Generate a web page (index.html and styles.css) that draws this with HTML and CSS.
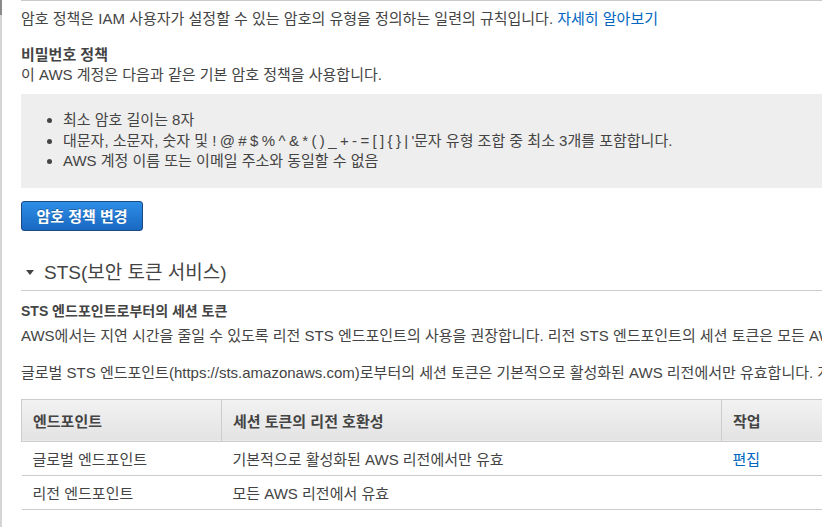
FILE: index.html
```html
<!DOCTYPE html>
<html lang="ko">
<head>
<meta charset="utf-8">
<link rel="stylesheet" href="styles.css">
</head>
<body>
<div class="page">
  <div class="content">
    <p class="intro">암호 정책은 IAM 사용자가 설정할 수 있는 암호의 유형을 정의하는 일련의 규칙입니다. <a class="link" href="#">자세히 알아보기</a></p>

    <h3 class="subhead">비밀번호 정책</h3>
    <p class="desc">이 AWS 계정은 다음과 같은 기본 암호 정책을 사용합니다.</p>

    <div class="policy-box">
      <ul class="policy-list">
        <li>최소 암호 길이는 8자</li>
        <li>대문자, 소문자, 숫자 및 <span class="symbols">! @ # $ % ^ &amp; * ( ) _ + - = [ ] { } | '</span>문자 유형 조합 중 최소 3개를 포함합니다.</li>
        <li>AWS 계정 이름 또는 이메일 주소와 동일할 수 없음</li>
      </ul>
    </div>

    <div class="actions">
      <button class="btn-primary" type="button">암호 정책 변경</button>
    </div>

    <h2 class="section-title"><span class="caret"></span>STS(보안 토큰 서비스)</h2>

    <h3 class="subhead subhead-sm">STS 엔드포인트로부터의 세션 토큰</h3>
    <p class="desc desc-first">AWS에서는 지연 시간을 줄일 수 있도록 리전 STS 엔드포인트의 사용을 권장합니다. 리전 STS 엔드포인트의 세션 토큰은 모든 AWS 리전에서 유효합니다.</p>
    <p class="desc desc-gap">글로벌 STS 엔드포인트(https://sts.amazonaws.com)로부터의 세션 토큰은 기본적으로 활성화된 AWS 리전에서만 유효합니다. 계정에서 활성화하는 리전을 사용하려면 세션 토큰을 변경하십시오.</p>

    <table class="ep-table">
      <thead>
        <tr>
          <th class="c1">엔드포인트</th>
          <th class="c2">세션 토큰의 리전 호환성</th>
          <th class="c3">작업</th>
        </tr>
      </thead>
      <tbody>
        <tr>
          <td>글로벌 엔드포인트</td>
          <td>기본적으로 활성화된 AWS 리전에서만 유효</td>
          <td><a class="link" href="#">편집</a></td>
        </tr>
        <tr>
          <td>리전 엔드포인트</td>
          <td>모든 AWS 리전에서 유효</td>
          <td></td>
        </tr>
      </tbody>
    </table>
  </div>
</div>
</body>
</html>
```

FILE: styles.css
```css
html, body {
  margin: 0;
  padding: 0;
  background: #fff;
  overflow: hidden;
}

body {
  font-family: "Liberation Sans", Arial, "Noto Sans CJK KR", sans-serif;
  font-size: 15px;
  color: #444;
  width: 822px;
  height: 527px;
}

.page {
  position: relative;
  height: 527px;
  border-left: 2px solid #d5d5d5;
  box-sizing: border-box;
}

.page::before {
  content: "";
  position: absolute;
  left: -2px;
  top: 0;
  width: 2px;
  height: 15px;
  background: #8a8a8a;
}

.content {
  margin-left: 19px;
  border-top: 1px solid #cacaca;
  white-space: nowrap;
  overflow: hidden;
  height: 526px;
}

p, h2, h3, ul {
  margin: 0;
}

.intro {
  margin-top: 8px;
  line-height: 20px;
}

.link {
  color: #0066c0;
  text-decoration: none;
}

.subhead {
  margin-top: 16px;
  font-size: 15px;
  font-weight: bold;
  line-height: 20px;
}

.subhead-sm {
  margin-top: 10px;
  font-size: 14px;
}

.desc {
  line-height: 20px;
}

.desc-first {
  margin-top: 5px;
}

.desc-gap {
  margin-top: 17px;
}

.policy-box {
  margin-top: 9px;
  background: #eeeeee;
  padding: 16px 0 16px 0;
}

.policy-list {
  padding-left: 42px;
  line-height: 20.5px;
}

.symbols {
  letter-spacing: -0.4px;
}

.actions {
  margin-top: 13px;
  display: flex;
}

.btn-primary {
  font-family: inherit;
  font-size: 15px;
  font-weight: bold;
  color: #fff;
  height: 30px;
  width: 122px;
  padding: 0;
  border: 1px solid #1b4a85;
  border-radius: 3px;
  background: linear-gradient(#2e8ee6, #1968c2);
  text-shadow: 0 -1px 0 rgba(0,0,0,0.25);
}

.section-title {
  margin-top: 30px;
  display: flex;
  align-items: center;
  font-size: 19px;
  font-weight: normal;
  line-height: 24px;
  padding-bottom: 5px;
  border-bottom: 1px solid #cccccc;
}

.caret {
  width: 0;
  height: 0;
  border-left: 4px solid transparent;
  border-right: 4px solid transparent;
  border-top: 5px solid #444;
  margin-left: 5px;
  margin-right: 10px;
}

.ep-table {
  margin-top: 16px;
  width: 900px;
  border-collapse: collapse;
  font-size: 15px;
}

.ep-table th {
  text-align: left;
  font-weight: bold;
  height: 41px;
  padding: 0 11px;
  background: linear-gradient(#f2f2f2, #e3e3e3);
  border: 1px solid #cccccc;
}

.ep-table td {
  height: 33px;
  padding: 0 11px;
  border-bottom: 1px solid #cccccc;
}

.c1 { width: 177px; }
.c2 { width: 477px; }
```
